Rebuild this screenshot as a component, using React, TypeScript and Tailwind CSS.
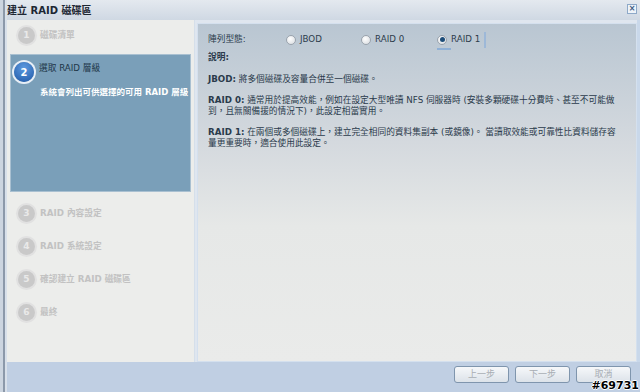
import React from "react";

const font = { fontFamily: '"DejaVu Sans", "Noto Sans CJK TC", sans-serif' };

type Step = { n: number; label: string };

const stepsAfter: Step[] = [
  { n: 3, label: "RAID 內容設定" },
  { n: 4, label: "RAID 系統設定" },
  { n: 5, label: "確認建立 RAID 磁碟區" },
  { n: 6, label: "最終" },
];

function GrayStep({ n, label }: Step) {
  return (
    <div className="flex items-center h-[17px] pl-[11px] gap-[5px]">
      <div className="w-[17px] h-[17px] rounded-full bg-[#c9c9c9] ring-2 ring-[#e1e1e1] flex items-center justify-center text-[9px] font-bold text-[#e9e9e9]">
        {n}
      </div>
      <span className="text-[8.7px] text-[#c2c2c2] font-bold whitespace-nowrap">{label}</span>
    </div>
  );
}

function Radio({ label, checked }: { label: string; checked?: boolean }) {
  return (
    <label className="flex items-center gap-[4px] text-[8.7px] text-[#2c3b4b] whitespace-nowrap">
      <span className="w-[10px] h-[10px] rounded-full border border-[#9aa3ad] bg-[radial-gradient(circle_at_40%_35%,#ffffff,#d5d9de)] flex items-center justify-center">
        {checked && <span className="w-[5px] h-[5px] rounded-full bg-[#1d4d7a]" />}
      </span>
      {label}
    </label>
  );
}

function Btn({ children }: { children: React.ReactNode }) {
  return (
    <button className="w-[55px] h-[17px] rounded-[3px] border border-[#7f95ad] bg-[linear-gradient(to_bottom,#f6f8fa,#dce2e9)] text-[9px] text-[#a8adb3] flex items-center justify-center">
      {children}
    </button>
  );
}

export default function App() {
  return (
    <div className="w-[640px] h-[392px] flex relative overflow-hidden bg-[#c0cfe3]" style={font}>
      {/* window left border */}
      <div className="w-[7px] h-full bg-[linear-gradient(to_right,#ccd5e0_0,#ccd5e0_3px,#8c99aa_3px,#8c99aa_5px,#d8e0ea_5px)]" />

      <div className="flex-1 flex flex-col">
        {/* title bar */}
        <div className="h-[20px] flex items-center justify-between bg-[linear-gradient(to_bottom,#e4e9ef,#cfd8e3)]">
          <span className="text-[10px] font-bold text-[#1d2733]">建立 RAID 磁碟區</span>
          <div className="w-[10px] h-[10px] mr-[3px] -mt-[3px] border border-[#8ea9c8] bg-[#eef3f9] flex items-center justify-center text-[8px] leading-none font-bold text-[#3c5a80]">
            ×
          </div>
        </div>

        <div className="h-[342px] flex bg-[#dfe6ef]">
          {/* steps */}
          <div className="w-[188px] bg-[#ecedeb] border-r border-[#d5dfea] flex flex-col pt-[7px]">
            <div className="flex items-center h-[17px] pl-[11px] gap-[5px]">
              <div className="w-[17px] h-[17px] rounded-full bg-[#c9c9c9] ring-2 ring-[#e1e1e1] flex items-center justify-center text-[9px] font-bold text-[#e9e9e9]">
                1
              </div>
              <span className="text-[8.7px] text-[#c2c2c2] font-bold">磁碟清單</span>
            </div>

            <div className="mt-[10px] mx-[3px] h-[138px] bg-[#7a9fb9] border border-[#a9c0d1] pt-[7px] pl-[3px]">
              <div className="flex items-center gap-[5px] h-[20px]">
                <div className="w-[20px] h-[20px] rounded-full bg-[radial-gradient(circle_at_50%_30%,#5d9ae0,#1f57a6)] ring-2 ring-[#e7eef6] flex items-center justify-center text-[10px] font-bold text-white">
                  2
                </div>
                <span className="text-[8.7px] text-[#203648] -mt-[6px] whitespace-nowrap">選取 RAID 層級</span>
              </div>
              <div className="pl-[26px] mt-[4px] text-[8.5px] font-bold text-white whitespace-nowrap">
                系統會列出可供選擇的可用 RAID 層級
              </div>
            </div>

            <div className="flex flex-col gap-[16px] mt-[13px]">
              {stepsAfter.map((s) => (
                <GrayStep key={s.n} {...s} />
              ))}
            </div>
          </div>

          {/* content */}
          <div className="flex-1 ml-[2px] mt-[3px] border border-[#d4e0ee] bg-[linear-gradient(to_bottom,#b9c6d2_0%,#d4d9de_35%,#e6e8e7_60%,#eaebea_100%)] px-[10px] pt-[9px] text-[#2a3a4b]">
            <div className="flex items-center h-[14px] text-[8.7px]">
              <span className="w-[78px]">陣列型態:</span>
              <div className="w-[75px]"><Radio label="JBOD" /></div>
              <div className="w-[76px]"><Radio label="RAID 0" /></div>
              <div className="pr-[4px] border-r-2 border-[#9db8d8] h-[16px] flex flex-col justify-center">
                <Radio label="RAID 1" checked />
                <div className="w-[14px] h-[2px] bg-[#8fb0d6] mt-[1px] -mb-[3px]" />
              </div>
            </div>
            <div className="text-[8.7px] font-bold mt-[4px]">說明:</div>

            <div className="text-[8.7px] leading-[11px] mt-[10px] flex flex-col gap-[10px] whitespace-nowrap">
              <p>
                <b>JBOD:</b> 將多個磁碟及容量合併至一個磁碟。
              </p>
              <p>
                <b>RAID 0:</b> 通常用於提高效能，例如在設定大型唯讀 NFS 伺服器時 (安裝多顆硬碟十分費時、甚至不可能做
                <br />
                到，且無關備援的情況下)，此設定相當實用。
              </p>
              <p>
                <b>RAID 1:</b> 在兩個或多個磁碟上，建立完全相同的資料集副本 (或鏡像)。 當讀取效能或可靠性比資料儲存容
                <br />
                量更重要時，適合使用此設定。
              </p>
            </div>
          </div>
          <div className="w-[3px] bg-[#c9d8ea]" />
        </div>

        {/* bottom bar */}
        <div className="flex-1 flex justify-end items-start pt-[4px] pr-[9px] gap-[6px]">
          <Btn>上一步</Btn>
          <Btn>下一步</Btn>
          <Btn>取消</Btn>
        </div>
      </div>

      <div className="absolute right-[1px] bottom-[1px] text-[11px] font-bold text-black leading-none [text-shadow:1px_0_0_#fff,-1px_0_0_#fff,0_1px_0_#fff,0_-1px_0_#fff]">
        #69731
      </div>
    </div>
  );
}
